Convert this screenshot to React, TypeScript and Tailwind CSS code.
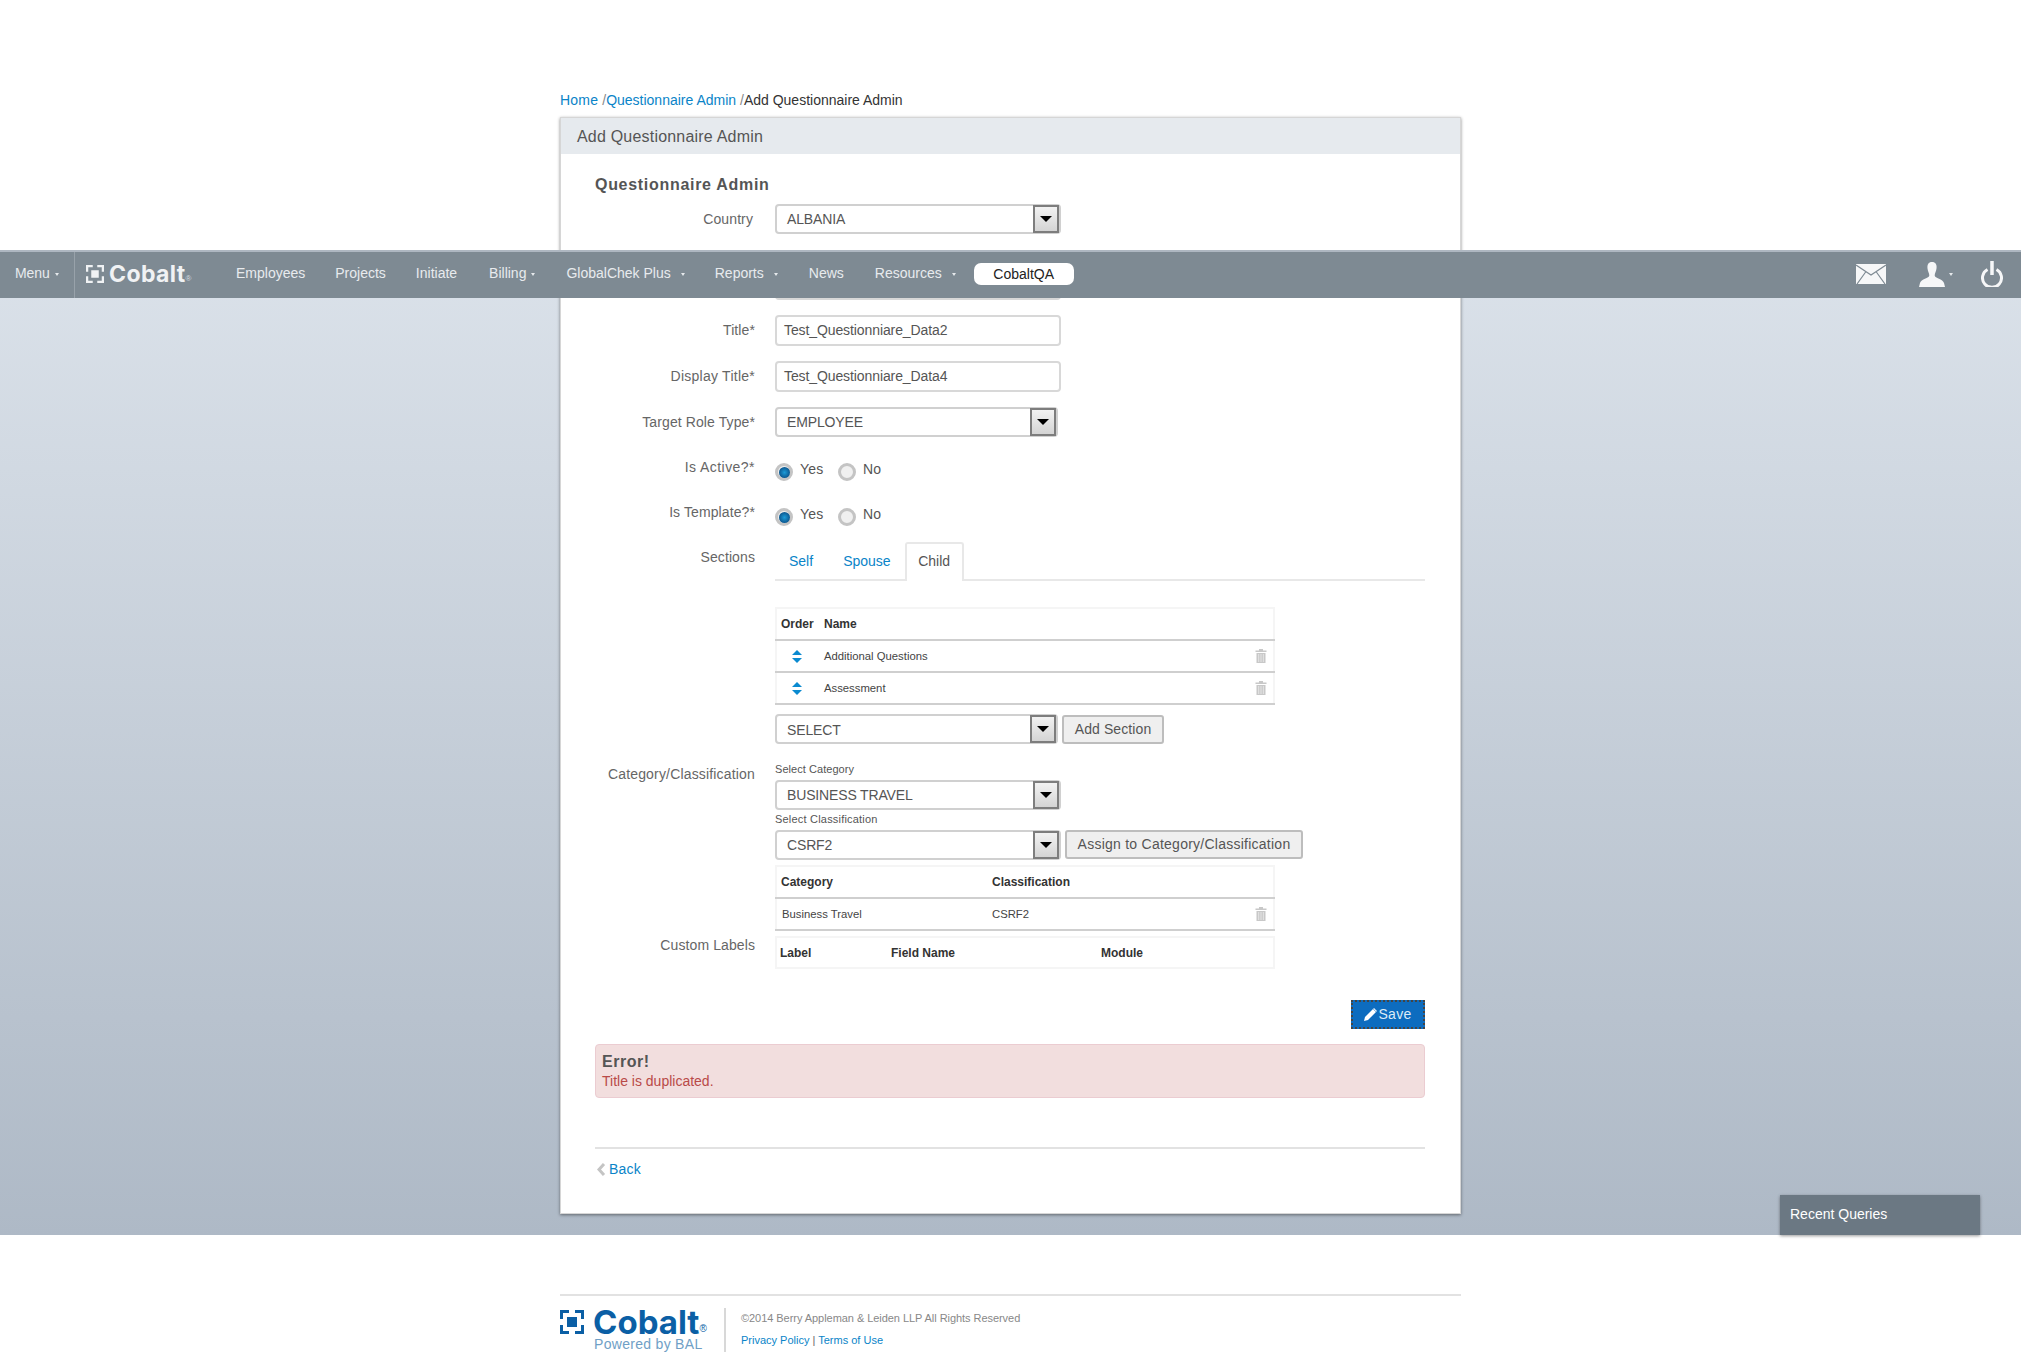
import React from "react";

function Arrow() {
  return <span className="block w-0 h-0 border-x-[6px] border-x-transparent border-t-[6px] border-t-black" />;
}

function Select({ value, w, text = "leading-[27px]" }: { value: string; w: string; text?: string }) {
  return (
    <div className={`${w} h-[30px] flex items-stretch rounded-[4px] border-2 border-[#d0d0d0] bg-white shrink-0`}>
      <span className={`flex-1 pl-[10px] ${text} text-[14px] tracking-[-0.15px] text-[#555]`}>{value}</span>
      <span className="w-[26px] -my-px border-2 border-[#7d7d7d] bg-[linear-gradient(#f2f2f2,#d4d4d4)] flex items-center justify-center">
        <Arrow />
      </span>
    </div>
  );
}

function Input({ value }: { value: string }) {
  return (
    <div className="w-[286px] h-[31px] rounded-[4px] border-2 border-[#d8d8d8] bg-white pl-[7px] leading-[27px] text-[14px] tracking-[-0.1px] text-[#555]">
      {value}
    </div>
  );
}

function Row({ label, children, className = "", labelClass = "" }: { label?: string; children: React.ReactNode; className?: string; labelClass?: string }) {
  return (
    <div className={`flex ${className}`}>
      <div className={`w-[160px] mr-[20px] shrink-0 text-right text-[14px] tracking-[0.1px] text-[#666] ${labelClass}`}>{label}</div>
      <div className="flex-1 min-w-0">{children}</div>
    </div>
  );
}

function Radio({ on }: { on?: boolean }) {
  return (
    <span className="w-[18px] h-[18px] rounded-full border-[3px] border-[#c4c4c4] bg-[#f0f0f0] flex items-center justify-center shrink-0">
      {on && <span className="w-[11px] h-[11px] rounded-full bg-[radial-gradient(circle_at_50%_50%,#1c9bd8,#0b4f86_80%)]" />}
    </span>
  );
}

function Radios() {
  return (
    <div className="flex text-[14px] text-[#555] tracking-[0.2px]">
      <Radio on />
      <span className="ml-[7px] w-[38px] -mt-[2px]">Yes</span>
      <Radio />
      <span className="ml-[7px] -mt-[2px]">No</span>
    </div>
  );
}

function Trash() {
  return (
    <svg width="12" height="14" viewBox="0 0 12 14" className="shrink-0">
      <path fill="#c8c8c8" d="M4 0h4v1.5h3.5V3H.5V1.5H4zM1.5 4h9v10h-9z" />
      <path stroke="#eee" strokeWidth="0.8" d="M3.700 5v8M6 5v8M8.300 5v8" />
    </svg>
  );
}

function Updown() {
  return (
    <span className="flex flex-col gap-[3px] items-center w-[16px] ml-[12px] mr-[19px]">
      <span className="block w-0 h-0 border-x-[5px] border-x-transparent border-b-[5px] border-b-[#0a8ad0]" />
      <span className="block w-0 h-0 border-x-[5px] border-x-transparent border-t-[5px] border-t-[#0a8ad0]" />
    </span>
  );
}

function TableBox({ children, className = "" }: { children: React.ReactNode; className?: string }) {
  return <div className={`w-[500px] border-x-2 border-t-2 border-[#f5f5f5] text-[11.3px] text-[#444] ${className}`}>{children}</div>;
}

function Btn({ children, w, track, className = "" }: { children: React.ReactNode; w: string; track: string; className?: string }) {
  return (
    <span className={`${w} ${track} ${className} h-[29px] ml-[4px] rounded-[3px] border-2 border-[#bdbdbd] bg-[#efefef] text-center leading-[24px] text-[14px] text-[#555] shrink-0`}>
      {children}
    </span>
  );
}

function LogoMark({ size, color }: { size: number; color: string }) {
  return (
    <svg width={size} height={size} viewBox="0 0 24 24" className="shrink-0">
      <path fill={color} d="M0 0h9v3H3v6H0zM15 0h9v9h-3V3h-6zM0 15h3v6h6v3H0zM21 15h3v9h-9v-3h6zM7 7h10v10H7z" />
    </svg>
  );
}

const Caret = ({ gap = "ml-[5px]" }: { gap?: string }) => (
  <span className={`inline-block ${gap} align-middle w-0 h-0 border-x-[2.5px] border-x-transparent border-t-[3px] border-t-[#e6e9ec]`} />
);

function Navbar() {
  const items: [string, string | null, string][] = [
    ["Employees", null, "mr-[30px]"],
    ["Projects", null, "mr-[30px]"],
    ["Initiate", null, "mr-[32px]"],
    ["Billing", "ml-[5px]", "mr-[31px]"],
    ["GlobalChek Plus", "ml-[10px]", "mr-[30px]"],
    ["Reports", "ml-[10px]", "mr-[31px]"],
    ["News", null, "mr-[31px]"],
    ["Resources", "ml-[10px]", "mr-[18px]"],
  ];
  return (
    <div className="absolute left-0 top-[250px] w-full h-[48px] bg-[#7e8a93] border-t-2 border-t-[#aeb7c1] flex items-center text-[14px] text-[#e8ebee]">
      <div className="w-[75px] h-full border-r border-r-[#98a2aa] pl-[15px] leading-[42px] tracking-[-0.1px] shrink-0">
        Menu<Caret />
      </div>
      <div className="flex items-center ml-[11px] w-[150px] shrink-0 -mt-[2px]">
        <LogoMark size={18} color="#f0f2f4" />
        <span className="ml-[5px] font-['Inter'] font-bold text-[23px] leading-none tracking-[0.4px] text-[#f0f2f4]">Cobalt</span>
        <span className="text-[8px] text-[#d8dde1] mt-[9px]">®</span>
      </div>
      <div className="flex items-center -mt-[3px]">
        {items.map(([t, c, m]) => (
          <span key={t} className={`${m} whitespace-nowrap`}>
            {t}
            {c && <Caret gap={c} />}
          </span>
        ))}
      </div>
      <span className="-mt-[3px] w-[100px] h-[22px] rounded-[7px] bg-white text-[#222] text-center text-[14px] leading-[22px]">CobaltQA</span>
      <div className="ml-auto flex items-center mr-[18px] -mt-[2px]">
        <svg width="30" height="20" viewBox="0 0 30 20" className="mr-[32px]">
          <path fill="#f6f7f8" d="M0 0h30v20H0z" />
          <path fill="none" stroke="#7e8a93" strokeWidth="1.200" d="M0 1 15 11 30 1M1 20 10 7.500M29 20 20 7.500" />
        </svg>
        <svg width="28" height="25" viewBox="0 0 28 25">
          <path fill="#f6f7f8" d="M14 0c3.500 0 5 2.500 4.500 6.500-.3 3-1.800 4.500-1.800 7 0 2.500 8.300 3.500 9.300 7.500l1 4H1l1-4c1-4 9.300-5 9.300-7.500 0-2.500-1.500-4-1.800-7C9 2.500 10.500 0 14 0z" />
        </svg>
        <span className="ml-[3px] mr-[28px] w-0 h-0 border-x-[2.5px] border-x-transparent border-t-[3px] border-t-[#e6e9ec]" />
        <svg width="22" height="26" viewBox="0 0 22 26">
          <path fill="none" stroke="#f6f7f8" strokeWidth="3" d="M6.500 8.500a9.500 9.500 0 1 0 9 0" />
          <path stroke="#f6f7f8" strokeWidth="3.500" d="M11 0v14" />
        </svg>
      </div>
    </div>
  );
}

export default function App() {
  return (
    <div className="relative w-[2021px] h-[1372px] overflow-hidden bg-white font-['Liberation_Sans',sans-serif]">
      <div className="h-[1235px] pt-[91px] bg-[linear-gradient(to_bottom,#fff_0,#fff_250px,#dbe2ea_250px,#aeb9c6_100%)]">
        <div className="w-[901px] mx-auto">
          <div className="h-[26px] leading-[18px] text-[14px] text-[#333]">
            <span className="text-[#0a84c8] tracking-[0.2px]">Home </span>
            <span className="text-[#888]">/</span>
            <span className="text-[#0a84c8]">Questionnaire Admin </span>
            <span className="text-[#888]">/</span>Add Questionnaire Admin
          </div>
          <div className="h-[1097px] bg-white border border-[#d6d6d6] shadow-[0_1px_3px_rgba(0,0,0,0.45)]">
            <div className="h-[36px] bg-[#e6eaee] pl-[16px] leading-[37px] text-[16px] tracking-[0.2px] text-[#555]">Add Questionnaire Admin</div>
            <div className="pl-[34px] pr-[35px] pt-[21px]">
              <div className="h-[20px] leading-[20px] text-[16px] font-bold tracking-[0.7px] text-[#555]">Questionnaire Admin</div>
              <Row label="Country" className="mt-[9px] h-[30px] leading-[30px]" labelClass="pr-[2px]">
                <Select value="ALBANIA" w="w-[286px]" />
              </Row>
              <Row className="mt-[35px] h-[31px]">
                <Input value="" />
              </Row>
              <Row label="Title*" className="mt-[15px] h-[31px] leading-[31px]">
                <Input value="Test_Questionniare_Data2" />
              </Row>
              <Row label="Display Title*" className="mt-[15px] h-[31px] leading-[31px]" labelClass="tracking-[0.25px]">
                <Input value="Test_Questionniare_Data4" />
              </Row>
              <Row label="Target Role Type*" className="mt-[15px] h-[30px] leading-[30px]">
                <Select value="EMPLOYEE" w="w-[283px]" />
              </Row>
              <Row label="Is Active?*" className="mt-[26px] h-[18px] leading-[16px]" labelClass="-mt-[4px] tracking-[0.45px]">
                <Radios />
              </Row>
              <Row label="Is Template?*" className="mt-[27px] h-[18px] leading-[16px]" labelClass="-mt-[4px]">
                <Radios />
              </Row>
              <Row label="Sections" className="mt-[16px] h-[39px] leading-[30px]">
                <div className="h-[39px] border-b-2 border-b-[#e8e8e8] flex text-[14px] leading-[39px]">
                  <span className="ml-[14px] text-[#0a84c8]">Self</span>
                  <span className="ml-[30px] text-[#0a84c8]">Spouse</span>
                  <span className="ml-[14px] w-[59px] h-[39px] border-2 border-b-0 border-[#e8e8e8] rounded-t-[3px] bg-white text-center text-[#555] leading-[35px]">Child</span>
                </div>
              </Row>
              <Row className="mt-[26px]">
                <TableBox>
                  <div className="h-[32px] border-b-2 border-b-[#cfcfcf] flex items-center -mx-[2px] px-[2px] font-bold text-[12px] text-[#333]">
                    <span className="w-[47px] pl-[4px]">Order</span>
                    <span>Name</span>
                  </div>
                  <div className="h-[32px] border-b-2 border-b-[#cfcfcf] flex items-center -mx-[2px] px-[2px]">
                    <Updown />
                    <span className="flex-1">Additional Questions</span>
                    <span className="mr-[6px]"><Trash /></span>
                  </div>
                  <div className="h-[32px] border-b-2 border-b-[#cfcfcf] flex items-center -mx-[2px] px-[2px]">
                    <Updown />
                    <span className="flex-1">Assessment</span>
                    <span className="mr-[6px]"><Trash /></span>
                  </div>
                </TableBox>
              </Row>
              <Row className="mt-[9px]">
                <div className="flex items-center">
                  <Select value="SELECT" w="w-[283px]" text="leading-[28px]" />
                  <Btn w="w-[102px]" track="tracking-[0.1px]">Add Section</Btn>
                </div>
              </Row>
              <Row label="Category/Classification" className="mt-[18px]" labelClass="pt-[2px] tracking-[0.17px]">
                <div className="h-[18px] leading-[15px] text-[11px] text-[#555] tracking-[0.05px]">Select Category</div>
                <Select value="BUSINESS TRAVEL" w="w-[286px]" />
                <div className="mt-[2px] h-[18px] leading-[15px] text-[11px] text-[#555] tracking-[0.2px]">Select Classification</div>
                <div className="flex items-center">
                  <Select value="CSRF2" w="w-[286px]" />
                  <Btn w="w-[238px]" track="tracking-[0.25px]" className="-mt-[2px]">Assign to Category/Classification</Btn>
                </div>
              </Row>
              <Row className="mt-[5px]">
                <TableBox>
                  <div className="h-[32px] border-b-2 border-b-[#cfcfcf] flex items-center -mx-[2px] px-[2px] font-bold text-[12px] text-[#333]">
                    <span className="w-[215px] pl-[4px]">Category</span>
                    <span>Classification</span>
                  </div>
                  <div className="h-[32px] border-b-2 border-b-[#cfcfcf] flex items-center -mx-[2px] px-[2px]">
                    <span className="w-[215px] pl-[5px]">Business Travel</span>
                    <span className="flex-1">CSRF2</span>
                    <span className="mr-[6px]"><Trash /></span>
                  </div>
                </TableBox>
              </Row>
              <Row label="Custom Labels" className="mt-[5px]" labelClass="-mt-[1px] tracking-[0.1px]">
                <TableBox className="border-b-2 h-[33px]">
                  <div className="h-[29px] flex items-center font-bold text-[12px] text-[#333]">
                    <span className="w-[114px] pl-[3px]">Label</span>
                    <span className="w-[210px]">Field Name</span>
                    <span>Module</span>
                  </div>
                </TableBox>
              </Row>
              <div className="mt-[31px] flex justify-end">
                <span className="w-[74px] h-[29px] bg-[#0d6cbf] border-2 border-dotted border-[#444] flex items-center justify-center text-[14px] tracking-[0.3px] text-[#dcebf7]">
                  <svg width="13" height="13" viewBox="0 0 13 13" className="mr-px">
                    <path fill="#fff" d="M9 1l3 3-8 8-4 1 1-4zM10 0l3 3-.7.7-3-3z" />
                  </svg>
                  Save
                </span>
              </div>
              <div className="mt-[15px] h-[54px] rounded-[4px] border border-[#ebccd1] bg-[#f2dede] pl-[6px] pt-[8px]">
                <div className="leading-[18px] text-[16px] font-bold tracking-[0.5px] text-[#555]">Error!</div>
                <div className="leading-[20px] text-[14px] text-[#b94a48]">Title is duplicated.</div>
              </div>
              <div className="mt-[49px] border-t-2 border-t-[#e2e2e2] pt-[10px] flex items-center text-[14px] tracking-[0.2px] text-[#0a84c8]">
                <svg width="9" height="13" viewBox="0 0 9 13" className="ml-[2px] mr-[3px]">
                  <path fill="none" stroke="#c4c4c4" strokeWidth="3" d="M7 1 2 6.500 7 12" />
                </svg>
                Back
              </div>
            </div>
          </div>
        </div>
      </div>

      <Navbar />

      <div className="absolute left-[1780px] top-[1195px] w-[200px] h-[40px] bg-[#6b7883] shadow-[0_1px_3px_rgba(0,0,0,0.4)] pl-[10px] leading-[38px] text-[14px] text-white">
        Recent Queries
      </div>

      <div className="w-[901px] mx-auto mt-[59px] border-t-2 border-t-[#e2e2e2] pt-[12px] flex">
        <div className="w-[166px] h-[44px] border-r-2 border-r-[#d8d8d8] shrink-0">
          <div className="flex items-center h-[27px] pt-[1px]">
            <LogoMark size={24} color="#0b5fa5" />
            <span className="ml-[9px] font-['Inter'] font-bold text-[33px] leading-[26px] text-[#0b5fa5]">Cobalt</span>
            <span className="text-[10px] leading-[10px] text-[#0b5fa5] mt-[14px]">®</span>
          </div>
          <div className="ml-[34px] mt-[2px] text-[14px] leading-[15px] tracking-[0.3px] text-[#6f9fc6]">Powered by BAL</div>
        </div>
        <div className="ml-[15px] text-[11px]">
          <div className="mt-[3px] leading-[14px] tracking-[-0.05px] text-[#888]">©2014 Berry Appleman &amp; Leiden LLP All Rights Reserved</div>
          <div className="mt-[8px] leading-[14px] text-[#0a84c8]">
            Privacy Policy <span className="text-[#666]">|</span> Terms of Use
          </div>
        </div>
      </div>
    </div>
  );
}
